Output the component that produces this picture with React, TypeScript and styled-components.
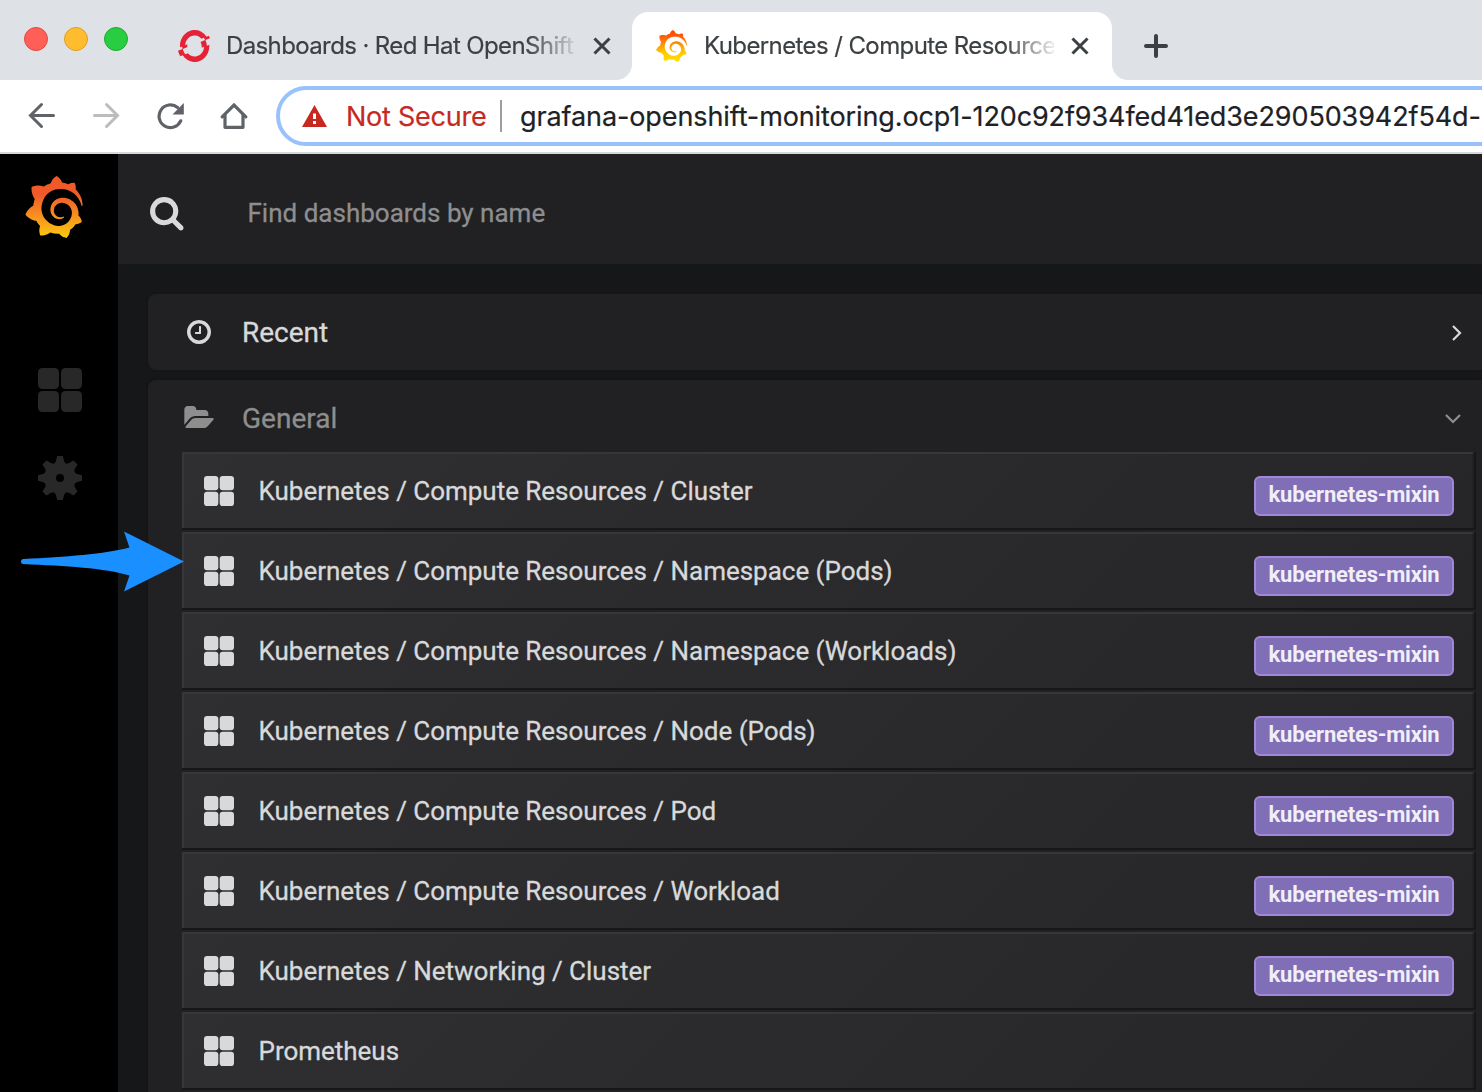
import React from "react";
import styled, { createGlobalStyle } from "styled-components";
import { SiGrafana, SiRedhatopenshift } from "react-icons/si";

const GlobalStyle = createGlobalStyle`
  *, *::before, *::after { box-sizing: border-box; }
  html, body { margin: 0; padding: 0; overflow: hidden; background: #000; }
`;

const Window = styled.div`
  position: relative;
  display: flex;
  flex-direction: column;
  width: 1482px;
  height: 1092px;
  overflow: hidden;
  font-family: Roboto, "Liberation Sans", sans-serif;
`;

/* ---------- browser chrome ---------- */

const TabStrip = styled.div`
  display: flex;
  align-items: flex-end;
  flex: none;
  height: 80px;
  background: #dee1e6;
  font-family: Inter, "Liberation Sans", sans-serif;
  -webkit-text-stroke: 0.2px;
`;

const WindowControls = styled.div`
  display: flex;
  gap: 16px;
  height: 80px;
  width: 152px;
  padding: 27px 0 0 24px;
`;

const ControlDot = styled.span<{ $fill: string; $ring: string }>`
  width: 24px;
  height: 24px;
  border-radius: 50%;
  background: ${(p) => p.$fill};
  border: 1px solid ${(p) => p.$ring};
`;

const Tab = styled.div<{ $active?: boolean }>`
  position: relative;
  display: flex;
  align-items: center;
  width: 480px;
  height: 68px;
  padding: 0 20px 0 24px;
  border-radius: 16px 16px 0 0;
  background: ${(p) => (p.$active ? "#fff" : "transparent")};

  &::before,
  &::after {
    content: "";
    display: ${(p) => (p.$active ? "block" : "none")};
    position: absolute;
    bottom: 0;
    width: 16px;
    height: 16px;
  }
  &::before {
    left: -16px;
    background: radial-gradient(circle at 0 0, transparent 15.5px, #fff 16.5px);
  }
  &::after {
    right: -16px;
    background: radial-gradient(circle at 100% 0, transparent 15.5px, #fff 16.5px);
  }
`;

const Favicon = styled.span<{ $indent?: number }>`
  display: flex;
  width: 32px;
  height: 32px;
  margin-left: ${(p) => p.$indent ?? 0}px;
  margin-right: 16px;
  flex: none;
`;

const TabTitle = styled.span<{ $spacing: number }>`
  width: 350px;
  flex: none;
  overflow: hidden;
  white-space: nowrap;
  font-size: 24px;
  line-height: 32px;
  letter-spacing: ${(p) => p.$spacing}px;
  color: #3c4043;
  mask-image: linear-gradient(to right, #000 300px, transparent 355px);
`;

const TabClose = styled.span`
  display: flex;
  margin-left: 17px;
  flex: none;
`;

const NewTab = styled.span`
  display: flex;
  align-items: center;
  height: 68px;
  margin-left: 32px;
`;

const Toolbar = styled.div`
  display: flex;
  align-items: center;
  flex: none;
  height: 74px;
  padding-left: 24px;
  background: #fff;
  border-bottom: 2px solid #d8d8dc;
  font-family: Inter, "Liberation Sans", sans-serif;
  -webkit-text-stroke: 0.2px;
`;

const NavButton = styled.span`
  display: flex;
  justify-content: center;
  width: 36px;
  margin-right: 28px;
  flex: none;
`;

const AddressBar = styled.div`
  display: flex;
  align-items: center;
  flex: none;
  width: 1300px;
  height: 60px;
  margin-left: -4px;
  padding-left: 22px;
  border: 4px solid #99c1fa;
  border-radius: 30px;
  white-space: nowrap;
  font-size: 27px;
`;

const NotSecure = styled.span`
  width: 154px;
  margin-left: 19px;
  color: #c5291f;
  letter-spacing: -0.25px;
`;

const AddressDivider = styled.span`
  width: 2px;
  height: 32px;
  margin-right: 18px;
  background: #9c9ea1;
`;

const Url = styled.span`
  color: #202124;
  letter-spacing: -0.11px;
`;

/* ---------- grafana ---------- */

const Page = styled.div`
  display: flex;
  flex: 1;
  min-height: 0;
  -webkit-text-stroke: 0.3px;
`;

const SideMenu = styled.nav`
  display: flex;
  flex-direction: column;
  flex: none;
  width: 118px;
  background: #000;
`;

const BrandLogo = styled.span`
  display: flex;
  height: 62px;
  margin: 22px 0 130px 23px;
`;

const SideIcon = styled.span`
  display: flex;
  margin: 0 0 44px 38px;
`;

const GrafanaMark = styled(SiGrafana)<{ $gradient: string }>`
  fill: url(#${(p) => p.$gradient});
  stroke: none;
`;

const Main = styled.main`
  flex: 1;
  min-width: 0;
  background: #161719;
`;

const SearchBar = styled.div`
  display: flex;
  align-items: center;
  height: 110px;
  padding: 10px 0 0 32px;
  background: #212124;
`;

const SearchHint = styled.span`
  margin: -2px 0 0 64px;
  color: #8e8e90;
  font-size: 26px;
`;

const Results = styled.div`
  display: flex;
  flex-direction: column;
  gap: 10px;
  width: 1370px;
  padding: 30px 0 0 30px;
`;

const Section = styled.section`
  border-radius: 8px;
  background: #212123;
  box-shadow: 0 0 0 2px #141517;
`;

const SectionHeader = styled.header<{ $dim?: boolean; $height: number }>`
  display: flex;
  align-items: center;
  height: ${(p) => p.$height}px;
  padding-left: 35px;
  color: ${(p) => (p.$dim ? "#8e8e8e" : "#d8d9da")};
`;

const SectionIcon = styled.span`
  display: flex;
  justify-content: center;
  width: 32px;
`;

const SectionTitle = styled.h2<{ $drop: number }>`
  flex: none;
  width: 1203px;
  margin: ${(p) => p.$drop}px 0 0 27px;
  font-size: 28px;
  font-weight: 400;
  line-height: 34px;
`;

const ChevronIcon = styled.svg`
  margin-top: 2px;
`;

const Rows = styled.ul`
  display: flex;
  flex-direction: column;
  gap: 4px;
  width: 1292px;
  margin: -2px 0 0 34px;
  padding: 0 0 20px;
  list-style: none;
`;

const Row = styled.li`
  display: flex;
  align-items: center;
  height: 76px;
  padding: 0 18px 0 20px;
  border-left: 2px solid #373739;
  border-top: 2px solid #373739;
  border-right: 2px solid transparent;
  background: linear-gradient(135deg, #2f2f32, #262628) padding-box;
  box-shadow: 1px 1px 0 1px #161719;
  color: #d8d9da;
`;

const RowTitle = styled.span`
  flex: 1;
  margin-left: 24.5px;
  font-size: 26px;
  line-height: 32px;
  letter-spacing: -0.02px;
`;

const Tag = styled.span`
  width: 200px;
  height: 40px;
  margin-top: 10px;
  border: 2px solid #9f87d9;
  border-radius: 6px;
  background: #806eb7;
  color: #f0eef6;
  font-size: 22px;
  font-weight: 700;
  line-height: 33px;
  letter-spacing: -0.2px;
  text-align: center;
  -webkit-text-stroke: 0;
`;

const Pointer = styled.svg`
  position: absolute;
  left: 16px;
  top: 526px;
`;

const SquaresIcon = ({ size, color }: { size: number; color: string }) => (
  <svg width={size} height={size} viewBox="0 0 44 44" fill={color}>
    <rect x="0" y="0" width="21" height="21" rx="4.5" />
    <rect x="23" y="0" width="21" height="21" rx="4.5" />
    <rect x="0" y="23" width="21" height="21" rx="4.5" />
    <rect x="23" y="23" width="21" height="21" rx="4.5" />
  </svg>
);

const GearIcon = () => (
  <svg width="44" height="44" viewBox="-22 -22 44 44">
    <g fill="#282828">
      <circle r="15.5" />
      {[0, 45, 90, 135, 180, 225, 270, 315].map((a) => (
        <path key={a} transform={`rotate(${a})`} d="M-2.8-22H2.8L4.2-16.5Q5-15 6.5-14V-10H-6.5V-14Q-5-15-4.2-16.5Z" />
      ))}
    </g>
    <circle r="4" fill="#000" />
  </svg>
);

const CloseIcon = () => (
  <svg width="18" height="18" viewBox="0 0 18 18" stroke="#3c4043" strokeWidth="3">
    <path d="M1.5 1.5l15 15M16.5 1.5l-15 15" />
  </svg>
);

const ROWS: { title: string; tag?: string }[] = [
  { title: "Kubernetes / Compute Resources / Cluster", tag: "kubernetes-mixin" },
  { title: "Kubernetes / Compute Resources / Namespace (Pods)", tag: "kubernetes-mixin" },
  { title: "Kubernetes / Compute Resources / Namespace (Workloads)", tag: "kubernetes-mixin" },
  { title: "Kubernetes / Compute Resources / Node (Pods)", tag: "kubernetes-mixin" },
  { title: "Kubernetes / Compute Resources / Pod", tag: "kubernetes-mixin" },
  { title: "Kubernetes / Compute Resources / Workload", tag: "kubernetes-mixin" },
  { title: "Kubernetes / Networking / Cluster", tag: "kubernetes-mixin" },
  { title: "Prometheus" },
];

export default function App() {
  return (
    <Window>
      <GlobalStyle />
      <svg width="0" height="0" style={{ position: "absolute" }}>
        <defs>
          <linearGradient id="brand" x1="0" y1="24" x2="0" y2="0" gradientUnits="userSpaceOnUse">
            <stop offset="0" stopColor="#fcc90f" />
            <stop offset="0.3" stopColor="#f89a1c" />
            <stop offset="0.7" stopColor="#f05a28" />
            <stop offset="1" stopColor="#f05a28" />
          </linearGradient>
          <linearGradient id="fav" x1="0" y1="24" x2="0" y2="0" gradientUnits="userSpaceOnUse">
            <stop offset="0" stopColor="#ffe100" />
            <stop offset="0.3" stopColor="#ffc800" />
            <stop offset="0.85" stopColor="#ff5208" />
            <stop offset="1" stopColor="#ff4a00" />
          </linearGradient>
        </defs>
      </svg>

      <TabStrip>
        <WindowControls>
          <ControlDot $fill="#ff5f57" $ring="#e2483f" />
          <ControlDot $fill="#febc2e" $ring="#dd9f25" />
          <ControlDot $fill="#28cd41" $ring="#1dab2c" />
        </WindowControls>
        <Tab>
          <Favicon $indent={2}>
            <SiRedhatopenshift size={32} color="#e52337" viewBox="0 1 24 22" preserveAspectRatio="none" />
          </Favicon>
          <TabTitle $spacing={-0.62}>Dashboards · Red Hat OpenShift</TabTitle>
          <TabClose><CloseIcon /></TabClose>
        </Tab>
        <Tab $active>
          <Favicon>
            <GrafanaMark size={32} $gradient="fav" viewBox="0.9 0 23 24" preserveAspectRatio="none" />
          </Favicon>
          <TabTitle $spacing={-0.6}>Kubernetes / Compute Resource</TabTitle>
          <TabClose><CloseIcon /></TabClose>
        </Tab>
        <NewTab>
          <svg width="24" height="24" viewBox="0 0 24 24" stroke="#3c4043" strokeWidth="4" strokeLinecap="round">
            <path d="M2 12h20M12 2v20" />
          </svg>
        </NewTab>
      </TabStrip>

      <Toolbar>
        <NavButton>
          <svg width="28" height="28" viewBox="0 0 28 28" fill="none" stroke="#5f6368" strokeWidth="3" strokeLinecap="round">
            <path d="M25.5 13.5H3M13.5 2.5L2.5 13.5l11 11" />
          </svg>
        </NavButton>
        <NavButton>
          <svg width="28" height="28" viewBox="0 0 28 28" fill="none" stroke="#babcbe" strokeWidth="3" strokeLinecap="round">
            <path d="M2.5 13.5h23M14.5 2.5l11 11-11 11" />
          </svg>
        </NavButton>
        <NavButton>
          <svg width="28" height="28" viewBox="0 0 28 28" fill="none">
            <path d="M24.7 18.8A11.3 11.3 0 1 1 21.6 5.5" stroke="#5f6368" strokeWidth="3.2" strokeLinecap="round" />
            <path d="M27.8 1v11.5H16.5z" fill="#5f6368" />
          </svg>
        </NavButton>
        <NavButton>
          <svg width="28" height="28" viewBox="0 0 28 28" fill="none" stroke="#5f6368" strokeWidth="3.2">
            <path d="M2.2 14.8L14 3l11.8 11.8" strokeLinecap="round" />
            <path d="M5 12.5v12.8h18V12.5" strokeLinejoin="round" />
          </svg>
        </NavButton>
        <AddressBar>
          <svg width="25" height="22" viewBox="0 0 25 22">
            <path d="M12.5 0L25 22H0z" fill="#c5291f" />
            <path d="M11 8.5h3v5.5h-3zM11 16h3v3h-3z" fill="#fff" />
          </svg>
          <NotSecure>Not Secure</NotSecure>
          <AddressDivider />
          <Url>grafana-openshift-monitoring.ocp1-120c92f934fed41ed3e290503942f54d-</Url>
        </AddressBar>
      </Toolbar>

      <Page>
        <SideMenu>
          <BrandLogo><GrafanaMark size={62} $gradient="brand" /></BrandLogo>
          <SideIcon><SquaresIcon size={44} color="#282828" /></SideIcon>
          <SideIcon><GearIcon /></SideIcon>
        </SideMenu>
        <Main>
          <SearchBar>
            <svg width="33.500" height="33.500" viewBox="0 128 1664 1664" fill="#d8d9da">
              <path d="M1152 832q0-185-131.5-316.5t-316.5-131.5-316.5 131.5-131.5 316.5 131.5 316.5 316.5 131.5 316.5-131.5 131.5-316.5zm512 832q0 52-38 90t-90 38q-54 0-90-38l-343-342q-179 124-399 124-143 0-273.5-55.5t-225-150-150-225-55.5-273.5 55.5-273.5 150-225 225-150 273.5-55.5 273.5 55.5 225 150 150 225 55.5 273.5q0 220-124 399l343 343q37 37 37 90z" />
            </svg>
            <SearchHint>Find dashboards by name</SearchHint>
          </SearchBar>
          <Results>
            <Section>
              <SectionHeader $height={76}>
                <SectionIcon>
                  <svg width="24" height="24" viewBox="128 128 1536 1536" fill="currentColor">
                    <path d="M1024 544v448q0 14-9 23t-23 9h-320q-14 0-23-9t-9-23v-64q0-14 9-23t23-9h224v-352q0-14 9-23t23-9h64q14 0 23 9t9 23zm416 352q0-148-73-273t-198-198-273-73-273 73-198 198-73 273 73 273 198 198 273 73 273-73 198-198 73-273zm224 0q0 209-103 385.5t-279.5 279.5-385.5 103-385.5-103-279.5-279.5-103-385.5 103-385.5 279.5-279.5 385.5-103 385.5 103 279.5 279.5 103 385.5z" />
                  </svg>
                </SectionIcon>
                <SectionTitle $drop={2}>Recent</SectionTitle>
                <ChevronIcon width="20" height="18" viewBox="0 0 20 18" fill="none" stroke="currentColor" strokeWidth="2.2">
                  <path d="M8 2l7 7-7 7" />
                </ChevronIcon>
              </SectionHeader>
            </Section>
            <Section>
              <SectionHeader $dim $height={74}>
                <SectionIcon>
                  <svg width="30" height="22" viewBox="64 128 1879 1408" fill="currentColor">
                    <path d="M1943 952q0 31-31 66l-336 396q-43 51-120.5 86.5t-143.5 35.5h-1088q-34 0-60.5-13t-26.5-43q0-31 31-66l336-396q43-51 120.5-86.5t143.5-35.5h1088q34 0 60.5 13t26.5 43zm-343-344v160h-832q-94 0-197 47.5t-164 119.5l-337 396-5 6q0-4-.5-12.5t-.5-12.5v-960q0-92 66-158t158-66h320q92 0 158 66t66 158v32h544q92 0 158 66t66 158z" />
                  </svg>
                </SectionIcon>
                <SectionTitle $drop={4}>General</SectionTitle>
                <ChevronIcon width="20" height="18" viewBox="0 0 20 18" fill="none" stroke="currentColor" strokeWidth="2.2">
                  <path d="M1 6l7 7 7-7" />
                </ChevronIcon>
              </SectionHeader>
              <Rows>
                {ROWS.map((row) => (
                  <Row key={row.title}>
                    <SquaresIcon size={30} color="#d8d9da" />
                    <RowTitle>{row.title}</RowTitle>
                    {row.tag && <Tag>{row.tag}</Tag>}
                  </Row>
                ))}
              </Rows>
            </Section>
          </Results>
        </Main>
      </Page>

      <Pointer width="172" height="72" viewBox="16 526 172 72">
        <path
          d="M23.5 559C65 557 105 554 129.5 547.5L124 531.5L184 561.5L124 591.5L129.5 575.5C105 568 65 566 23.5 564A2.5 2.5 0 0 1 23.5 559Z"
          fill="#1a8fff"
        />
      </Pointer>
    </Window>
  );
}
